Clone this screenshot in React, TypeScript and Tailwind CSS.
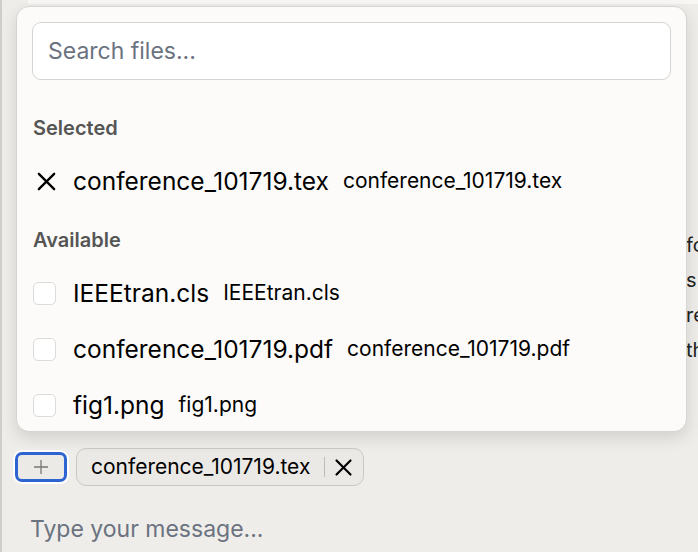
import React from 'react';

const XIcon = ({ size = 22, stroke = 2.2 }: { size?: number; stroke?: number }) => (
  <svg width={size} height={size} viewBox="0 0 24 24" fill="none" stroke="currentColor" strokeWidth={stroke} strokeLinecap="round">
    <path d="M4 4L20 20" />
    <path d="M20 4L4 20" />
  </svg>
);

const available = [
  { name: 'IEEEtran.cls' },
  { name: 'conference_101719.pdf' },
  { name: 'fig1.png' },
];

const App = () => {
  return (
    <div className="relative h-[552px] w-[698px] overflow-hidden border-l-2 border-[#cfcecb] bg-[#eeedea] font-['Inter',sans-serif]">
      {/* chat area behind the popover */}
      <div className="flex h-[432px] flex-col">
        <div className="ml-[26px] h-[4px] bg-[#f8f7f5]" />
        <div className="mt-[224px] flex flex-col pl-[684px] text-[20px] leading-[35px] text-[#222] whitespace-nowrap">
          <span>fo</span>
          <span>s</span>
          <span>re</span>
          <span>th</span>
        </div>
      </div>

      {/* attachments row */}
      <div className="flex items-center gap-[9px] pl-[13px] pt-[16px]">
        <button className="flex h-[30px] w-[52px] items-center justify-center rounded-[7px] border-[3px] border-[#2e64d2] bg-[#ebeae7] text-[#777] ring-2 ring-white">
          <svg width="16" height="16" viewBox="0 0 16 16" stroke="currentColor" strokeWidth="1.3">
            <path d="M8 1v14M1 8h14" />
          </svg>
        </button>
        <div className="flex h-[38px] items-center rounded-[10px] border-[1.5px] border-[#c9c8c5] bg-[#ebe9e6] pl-[14px] pr-[9px]">
          <span className="text-[21px] text-black">conference_101719.tex</span>
          <span className="ml-[14px] mr-[8px] h-[20px] w-px bg-[#bdbcb9]" />
          <span className="text-black"><XIcon size={21} stroke={2.5} /></span>
        </div>
      </div>
      <div className="pl-[28px] pt-[26px] text-[23px] text-[#6b7280]">Type your message...</div>

      {/* file picker popover */}
      <div className="absolute left-[14px] top-[6px] flex h-[426px] w-[671px] flex-col overflow-hidden rounded-[13px] border-[1.5px] border-[#d6d5d2] bg-[#fcfbf9] shadow-[0_6px_16px_rgba(0,0,0,0.12)]">
        <div className="p-[15px]">
          <div className="flex h-[58px] items-center rounded-[9px] border-[1.5px] border-[#d5d4d1] bg-white px-[15px] text-[23px] text-[#6b7280]">
            Search files...
          </div>
        </div>
        <div className="h-[1.5px] bg-[#d6d5d2]" />
        <div className="flex flex-col pl-[16px] pr-[15px] pt-[20px]">
          <div className="mb-[12px] h-[26px] text-[20px] font-semibold leading-[26px] text-[#555]">Selected</div>
          <div className="flex h-[56px] items-center">
            <span className="flex w-[26px] justify-center text-black"><XIcon size={23} stroke={2.4} /></span>
            <span className="ml-[14px] text-[24.5px] text-black">conference_101719.tex</span>
            <span className="ml-[14px] text-[21px] text-black">conference_101719.tex</span>
          </div>
          <div className="mb-[12px] mt-[18px] h-[26px] text-[20px] font-semibold leading-[26px] text-[#555]">Available</div>
          {available.map((f) => (
            <div key={f.name} className="flex h-[56px] items-center">
              <span className="h-[23px] w-[23px] rounded-[5px] border-[1.5px] border-[#dcdbd8] bg-white" />
              <span className="ml-[17px] text-[24.5px] text-black">{f.name}</span>
              <span className="ml-[14px] text-[21px] text-black">{f.name}</span>
            </div>
          ))}
        </div>
      </div>
    </div>
  );
};

export default App;
